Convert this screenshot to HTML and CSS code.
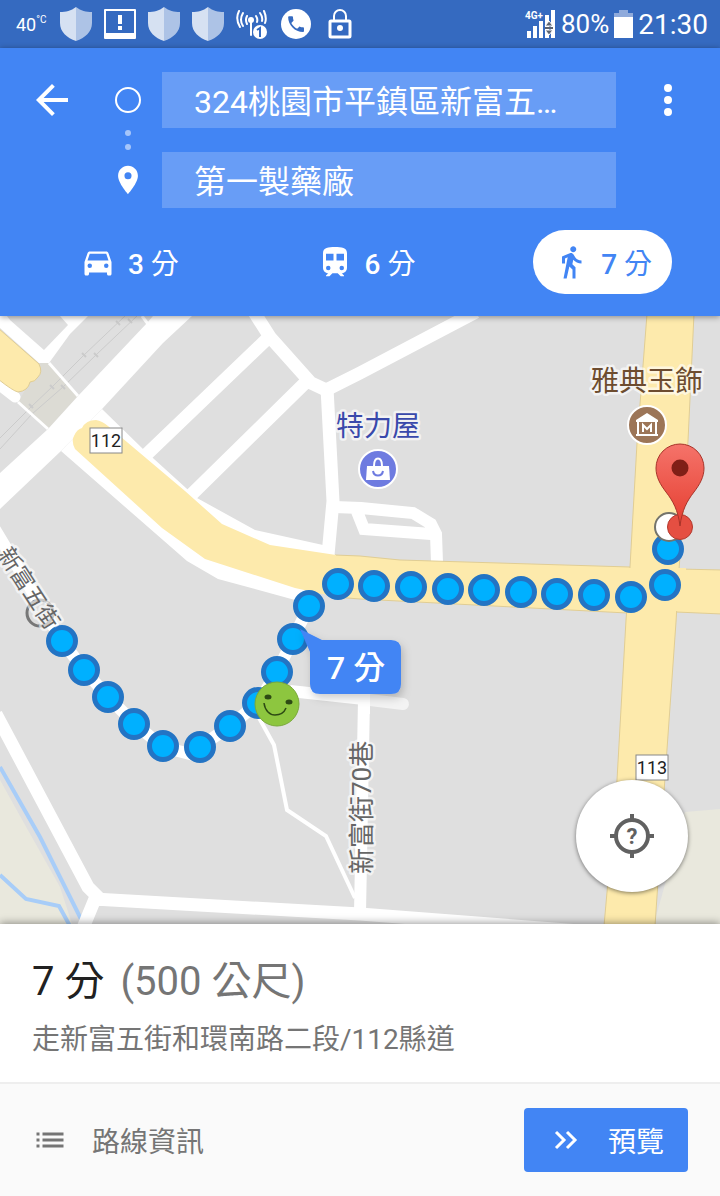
FILE: index.html
```html
<!DOCTYPE html>
<html lang="zh-Hant">
<head>
    <meta charset="UTF-8">
    <meta name="viewport" content="width=device-width, initial-scale=1">
    <title>路線規劃</title>
    <link rel="stylesheet" href="styles.css">
</head>
<body>
    <!-- shared icons -->
    <svg class="defs" aria-hidden="true">
        <symbol id="shield" viewBox="0 0 32 34">
            <path d="M16 0C11 4 6 5 0 5v11c0 9 7 15 16 18z" fill="#d6e1f2"/>
            <path d="M16 0c5 4 10 5 16 5v11c0 9-7 15-16 18z" fill="#adc3e6"/>
        </symbol>
    </svg>

    <div class="statusbar">
        <div class="status-left">
            <span class="temp">40<small>°C</small></span>
            <svg class="status-icon"><use href="#shield"/></svg>
            <svg class="status-icon" viewBox="0 0 32 34">
                <path d="M1 3h30v28H1z" fill="none" stroke="#fff" stroke-width="2" stroke-linejoin="round"/>
                <path d="M1 26h30v5H1zM14 8h4v9h-4zM14 19h4v4h-4z" fill="#fff"/>
                <path d="M11 26h10l-5 4z" fill="#fff"/>
            </svg>
            <svg class="status-icon"><use href="#shield"/></svg>
            <svg class="status-icon"><use href="#shield"/></svg>
            <svg class="status-icon" viewBox="0 0 32 34">
                <g fill="none" stroke="#fff" stroke-width="2" stroke-linecap="round">
                    <path d="M11 9q-2 4 0 8M7 6q-4 7 0 13M3 4q-4 8 1 16M20 9q2 3 1 6M24 6q3 4 2 8M28 4q3 7 1 12"/>
                    <path d="M15 13v15"/>
                </g>
                <circle cx="15" cy="13" r="3" fill="#fff"/>
                <circle cx="24" cy="25" r="7" fill="#fff"/>
                <path d="M21 23l3-2v9" fill="none" stroke="#356ac0" stroke-width="2"/>
            </svg>
            <svg class="status-icon" viewBox="0 0 32 34">
                <circle cx="16" cy="17" r="15" fill="#fff"/>
                <path transform="translate(5.500 6.500) scale(.88)" fill="#356ac0" d="M6.600 10.800c1.400 2.800 3.800 5.100 6.600 6.600l2.200-2.200c.3-.3.7-.4 1-.2 1.100.4 2.300.6 3.600.6.600 0 1 .4 1 1V20c0 .6-.4 1-1 1C10.600 21 3 13.400 3 4c0-.6.5-1 1-1h3.500c.6 0 1 .5 1 1 0 1.300.2 2.500.6 3.600.1.300 0 .7-.3 1z"/>
            </svg>
            <svg class="status-icon" viewBox="0 0 32 34">
                <rect x="6" y="14" width="20" height="16" rx="1" fill="none" stroke="#fff" stroke-width="3"/>
                <path d="M10 14V9a6 6 0 0 1 12 0v5" fill="none" stroke="#fff" stroke-width="2"/>
                <circle cx="16" cy="21" r="3" fill="#fff"/>
            </svg>
        </div>
        <div class="status-right">
            <svg class="signal" viewBox="0 0 32 30">
                <path d="M3 22h4v7H3zM9 17h4v12H9zM15 12h4v17h-4zM21 6h4v23h-4zM27 1h4v28h-4z" fill="#fff"/>
                <path d="M25 12l4 5h-8zM25 26l4-5h-8z" fill="#5a6270" stroke="#fff" stroke-width="1"/>
                <path d="M21 19h8" stroke="#5a6270" stroke-width="2"/>
                <text class="signal-text" x="1" y="10">4G+</text>
            </svg>
            <span class="battery-text">80%</span>
            <svg class="battery" viewBox="0 0 19 28">
                <path d="M5 0h9v3h5v5H0V3h5z" fill="#8faadb"/>
                <path d="M0 7h19v21H0z" fill="#fff"/>
            </svg>
            <span class="clock">21:30</span>
        </div>
    </div>

    <header class="header">
        <div class="search">
            <button class="icon-btn" aria-label="返回">
                <svg width="48" height="48" viewBox="0 0 24 24"><path d="M20 11H7.800l5.600-5.600L12 4l-8 8 8 8 1.400-1.400L7.800 13H20z" fill="#fff"/></svg>
            </button>
            <div class="rail">
                <span class="rail-end"><span class="origin"></span></span>
                <span class="rail-dots"><i></i><i></i></span>
                <span class="rail-end">
                    <svg width="34" height="34" viewBox="0 0 24 24"><path d="M12 2C8.100 2 5 5.100 5 9c0 5.300 7 13 7 13s7-7.700 7-13c0-3.900-3.100-7-7-7zm0 9.500a2.500 2.500 0 1 1 0-5 2.500 2.500 0 0 1 0 5z" fill="#fff"/></svg>
                </span>
            </div>
            <div class="fields">
                <input type="text" class="field" aria-label="起點" value="324桃園市平鎮區新富五…">
                <input type="text" class="field" aria-label="目的地" value="第一製藥廠">
            </div>
            <button class="icon-btn" aria-label="更多選項">
                <svg width="48" height="48" viewBox="0 0 24 24"><path d="M12 8a2 2 0 1 0 0-4 2 2 0 0 0 0 4zm0 2a2 2 0 1 0 0 4 2 2 0 0 0 0-4zm0 6a2 2 0 1 0 0 4 2 2 0 0 0 0-4z" fill="#fff"/></svg>
            </button>
        </div>

        <nav class="modes">
            <button class="mode">
                <svg viewBox="0 0 24 24"><path d="M18.920 6.010C18.720 5.420 18.160 5 17.500 5h-11c-.66 0-1.210.42-1.420 1.010L3 12v8c0 .55.45 1 1 1h1c.55 0 1-.45 1-1v-1h12v1c0 .55.45 1 1 1h1c.55 0 1-.45 1-1v-8zM6.500 16a1.500 1.500 0 1 1 0-3 1.500 1.500 0 0 1 0 3zm11 0a1.500 1.500 0 1 1 0-3 1.500 1.500 0 0 1 0 3zM5 11l1.500-4.500h11L19 11z"/></svg>
                <span><b>3</b> 分</span>
            </button>
            <button class="mode">
                <svg viewBox="0 0 24 24"><path d="M12 2c-4.400 0-8 .5-8 4v9.800C4 17.800 5.600 19.500 7.500 19.500L6 21v.5h2.300l2-2h3.500l2 2H18V21l-1.500-1.500c1.900 0 3.500-1.700 3.500-3.700V6c0-3.500-3.600-4-8-4zM7.500 17.500a1.500 1.500 0 1 1 0-3 1.500 1.500 0 0 1 0 3zm3.500-6.500H6V6.500h5zm5.500 6.500a1.500 1.500 0 1 1 0-3 1.500 1.500 0 0 1 0 3zm1.500-6.500h-5V6.500h5z"/></svg>
                <span><b>6</b> 分</span>
            </button>
            <button class="mode active">
                <svg viewBox="0 0 24 24"><path d="M13.500 5.500c1.100 0 2-.9 2-2s-.9-2-2-2-2 .9-2 2 .9 2 2 2zM9.800 8.900L7 23h2.100l1.800-8 2.100 2v6h2v-7.500l-2.100-2 .6-3C14.800 12 16.800 13 19 13v-2c-1.900 0-3.500-1-4.300-2.400l-1-1.600c-.4-.6-1-1-1.700-1-.3 0-.5.1-.8.1L6 8.300V13h2V9.600z"/></svg>
                <span><b>7</b> 分</span>
            </button>
        </nav>
    </header>

    <main class="map">
        <svg class="map-canvas" viewBox="0 0 720 608" preserveAspectRatio="xMidYMid slice" role="img" aria-label="步行路線地圖">
            <defs>
                <linearGradient id="pinFill" x1="0" y1="0" x2="0" y2="1">
                    <stop offset="0" stop-color="#f5736a"/>
                    <stop offset="1" stop-color="#e53e30"/>
                </linearGradient>
                <filter id="drop" x="-20%" y="-20%" width="150%" height="160%">
                    <feDropShadow dx="2" dy="4" stdDeviation="4" flood-opacity=".2"/>
                </filter>
            </defs>

            <!-- land and water -->
            <rect width="720" height="608" fill="#dfdfdf"/>
            <path d="M0 464l20 36 40 71 12 37H0zM685 496l35-3v115h-66z" fill="#e9e8dd"/>
            <path d="M0 451l40 70 42 84M0 559l26 24 33 7 11 20" fill="none" stroke="#a8cdf8" stroke-width="4"/>

            <!-- railway -->
            <path d="M39 47h10l29 33-30 33-30-27 12-20z" fill="#dcdbd4"/>
            <path d="M0 122l32-32 20-19 32-32L125 0M0 133l32-35 31-27 34-33 40-38" fill="none" stroke="#cbcbcb" stroke-width="1"/>
            <path d="M29 88l4 4M50 69l4 4M61 69l4 4M82 37l4 4M94 37l4 4M31 97l4 4M116 5l4 4M128 3l4 4" stroke="#cbcbcb" stroke-width="2"/>

            <!-- white roads -->
            <path d="M0 157l48-44 30-33 69-73 6-7h39l-29 27-61 66-41 42-61 58z" fill="#fff"/>
            <path d="M0 0h7l3 4 34 30L68 9l-8-9h28L70 18 49 47H39L0 12z" fill="#fff"/>
            <path d="M49 47l29 33M18 86l30 27M142 0l6 8" fill="none" stroke="#fff" stroke-width="3"/>
            <path d="M-4 66l19 15" stroke="#fff" stroke-width="11" stroke-linecap="round"/>
            <g fill="none" stroke="#fff" stroke-width="13">
                <path d="M254-4l16 25 41 46 15 7 34-17L476-4"/>
                <path d="M327 72l6 113-5 54"/>
                <path d="M268 22L147 138M305 67L190 180"/>
                <path d="M334 191l27 1 52 5 18 11 5 10 1 29M431 218l-67-5-8-20" stroke-width="12"/>
                <path d="M-4 398l92 173 12 12M97 578l-14 34M94 583l266 15 220 17"/>
                <path d="M290 375l74 8-4 214" stroke-width="12"/>
                <path d="M370 384l33 4" stroke="#f3f3f3" stroke-width="12" stroke-linecap="round"/>
                <path d="M364 378v20" stroke-width="12"/>
                <path d="M-6 212l68 113 22 29 25 28 25 25 29 24 27 7 40-28 28-23 19-31 16-33 16-33" stroke-width="12"/>
                <path d="M258 400l16 29 13 65 39 26 29 62" stroke-width="4"/>
            </g>
            <path d="M102 93l41 40 54 49 58 32 68 15 12 10-25 46-15-1-77-21-31-18L61 135z" fill="#fff"/>

            <!-- county roads -->
            <g fill="#fdeaac" stroke="#e0cd94" stroke-width="1">
                <path d="M-2 12l41 36q4 8-1 13-3 5-8 5-2 9-12 10-5-1-20-13z"/>
                <path d="M335 239l25 1 40 4 230 7 49 2 43 1v44l-46-2-49 1-267-14-25-2z"/>
            </g>
            <path d="M75 133q-4-8-1-13 3-7 8-8 4-8 14-8 6 1 12 6l77 65 37 33 48 21 66 10v42l-41-9-90-29-43-31z" fill="#fdeaac"/>
            <g fill="#fdeaac">
                <path d="M647-2l-10 129-7 124-4 53-9 160-13 146h51l9-134 12-170 3-52 9-129 6-127z" stroke="#e0cd94" stroke-width="1"/>
                <path d="M622 252h64v43h-64z"/>
            </g>

            <!-- road numbers -->
            <g class="plate">
                <rect x="90" y="112" width="32" height="25"/>
                <text x="106" y="131">112</text>
                <rect x="636" y="439" width="32" height="25"/>
                <text x="652" y="458">113</text>
            </g>

            <!-- route -->
            <circle cx="40" cy="297" r="13" fill="#ddd" stroke="#777" stroke-width="3"/>
            <g fill="#00b0ff" stroke="#2374c4" stroke-width="5">
                <circle cx="62" cy="325" r="13.500"/>
                <circle cx="84" cy="354" r="13.500"/>
                <circle cx="108" cy="381" r="13.500"/>
                <circle cx="134" cy="408" r="13.500"/>
                <circle cx="163" cy="430" r="13.500"/>
                <circle cx="200" cy="431" r="13.500"/>
                <circle cx="230" cy="410" r="13.500"/>
                <circle cx="258" cy="387" r="13.500"/>
                <circle cx="277" cy="356" r="13.500"/>
                <circle cx="293" cy="323" r="13.500"/>
                <circle cx="309" cy="290" r="13.500"/>
                <circle cx="338" cy="268" r="13.500"/>
                <circle cx="374" cy="270" r="13.500"/>
                <circle cx="411" cy="271" r="13.500"/>
                <circle cx="448" cy="273" r="13.500"/>
                <circle cx="484" cy="274" r="13.500"/>
                <circle cx="521" cy="276" r="13.500"/>
                <circle cx="557" cy="278" r="13.500"/>
                <circle cx="594" cy="279" r="13.500"/>
                <circle cx="631" cy="281" r="13.500"/>
                <circle cx="665" cy="269" r="13.500"/>
                <circle cx="668" cy="233" r="13.500"/>
            </g>
            <circle cx="669" cy="211" r="14" fill="#fff" stroke="#74746c" stroke-width="2"/>

            <!-- street and place names -->
            <text class="label street" transform="translate(-3 238) rotate(57)">新富五街</text>
            <text class="label lane" transform="translate(371 558) rotate(-90)">新富街70巷</text>
            <text class="label shop" x="336" y="120">特力屋</text>
            <text class="label museum" x="591" y="75">雅典玉飾</text>

            <g transform="translate(378 153)">
                <circle r="19" fill="#6e7be0" stroke="#fff" stroke-width="2"/>
                <path d="M-11-3h22l1 14h-24z" fill="#fff"/>
                <path d="M-4-3c0-10 8-10 8 0" fill="none" stroke="#fff" stroke-width="2"/>
                <path d="M-5 2c1 6 9 6 10 0" fill="none" stroke="#6e7be0" stroke-width="2"/>
            </g>
            <g transform="translate(647 109)">
                <circle r="19" fill="#9c7557" stroke="#fff" stroke-width="2"/>
                <path d="M0-12L11-5v2h-22v-2zM-11 9h22v2h-22z" fill="#fff"/>
                <path d="M-9-4V9M9-4V9" fill="none" stroke="#fff" stroke-width="2"/>
                <path d="M-4 7V0l4 4 4-4v7" fill="none" stroke="#fff" stroke-width="2"/>
            </g>

            <!-- destination pin -->
            <circle cx="680" cy="211" r="12.500" fill="#e54f42" stroke="#b2382c" stroke-width="1"/>
            <path d="M680 210c-2-16-7-25-14-34-6-8-10-15-10-24a24 24 0 0 1 48 0c0 9-4 16-10 24-7 9-12 18-14 34z" fill="url(#pinFill)" stroke="#a8342a" stroke-width="1"/>
            <circle cx="680" cy="152" r="8.500" fill="#801f17"/>

            <!-- current position -->
            <circle cx="277" cy="388" r="22" fill="#8dc63f" stroke="#79a93a" stroke-width="1"/>
            <ellipse cx="268" cy="381" rx="3.500" ry="2.500" fill="#2d4a14"/>
            <ellipse cx="289" cy="386" rx="3.500" ry="2.500" fill="#2d4a14"/>
            <path d="M264 387c1 8 6 12 11 12s9-2 11-7" fill="none" stroke="#2d4a14" stroke-width="1.500"/>

            <!-- time bubble -->
            <path d="M300 313l22 11h69q10 0 10 10v34q0 10-10 10h-71q-10 0-10-10v-32z" fill="#4285f4" filter="url(#drop)"/>
            <text class="bubble" x="327" y="363">7 分</text>
        </svg>

        <button class="locate" aria-label="我的位置">
            <svg width="44" height="44" viewBox="0 0 44 44">
                <g fill="none" stroke="#616161" stroke-width="4">
                    <circle cx="22" cy="22" r="16"/>
                    <path d="M22 0v6M22 38v6M0 22h6M38 22h6"/>
                </g>
                <text class="locate-mark" x="22" y="30">?</text>
            </svg>
        </button>
    </main>

    <section class="summary">
        <h1>7 分 <span>(500 公尺)</span></h1>
        <p>走新富五街和環南路二段/112縣道</p>
    </section>

    <footer class="footer">
        <button class="details">
            <svg width="36" height="36" viewBox="0 0 24 24"><path d="M3 13h2v-2H3zm0 4h2v-2H3zm0-8h2V7H3zm4 4h14v-2H7zm0 4h14v-2H7zM7 7v2h14V7z" fill="#757575"/></svg>
            路線資訊
        </button>
        <button class="preview">
            <svg width="24" height="20" viewBox="0 0 24 20"><path d="M2 2l8 8-8 8M13 2l8 8-8 8" fill="none" stroke="#fff" stroke-width="3"/></svg>
            預覽
        </button>
    </footer>
</body>
</html>
```

FILE: styles.css
```css
* {
    box-sizing: border-box;
}
body {
    margin: 0;
    min-height: 100vh;
    display: flex;
    flex-direction: column;
    font-family: Roboto, "Noto Sans CJK TC", sans-serif;
    font-size: 28px;
    color: #757575;
    background: #fff;
}
button {
    font: inherit;
    color: inherit;
    background: none;
    border: 0;
    padding: 0;
    cursor: pointer;
}
svg {
    display: block;
    flex: none;
}
.defs {
    position: absolute;
    width: 0;
    height: 0;
}

/* status bar */
.statusbar {
    display: flex;
    justify-content: space-between;
    align-items: center;
    height: 48px;
    padding: 0 12px 0 16px;
    background: #356ac0;
    color: #fff;
}
.status-left {
    display: flex;
    align-items: center;
    gap: 12px;
}
.temp {
    display: flex;
    width: 32px;
    font-size: 18px;
    font-weight: 400;
}
.temp small {
    font-size: 10px;
}
.status-icon {
    width: 32px;
    height: 34px;
}
.status-right {
    display: flex;
    align-items: center;
    gap: 5px;
}
.signal {
    width: 32px;
    height: 30px;
}
.signal-text {
    font-size: 10px;
    font-weight: 700;
    fill: #fff;
    stroke: #356ac0;
    stroke-width: 2px;
    paint-order: stroke;
}
.battery-text {
    font-size: 26px;
}
.battery {
    width: 19px;
    height: 28px;
}
.clock {
    font-size: 28px;
}

/* header */
.header {
    position: relative;
    z-index: 1;
    background: #4285f4;
    color: #fff;
    padding: 24px 0 22px;
    box-shadow: 0 1px 6px rgba(0,0,0,0.4);
}
.search {
    display: grid;
    grid-template-columns: 104px 48px 1fr 104px;
    align-items: start;
}
.icon-btn {
    display: flex;
    align-items: center;
    justify-content: center;
    height: 56px;
}
.rail-end {
    display: flex;
    align-items: center;
    justify-content: center;
    height: 56px;
}
.origin {
    width: 26px;
    height: 26px;
    border: 2px solid #fff;
    border-radius: 50%;
}
.rail-dots {
    display: flex;
    flex-direction: column;
    align-items: center;
    justify-content: center;
    gap: 8px;
    height: 24px;
}
.rail-dots i {
    width: 6px;
    height: 6px;
    border-radius: 50%;
    background: #a5c5fa;
}
.fields {
    display: flex;
    flex-direction: column;
    gap: 24px;
    padding-left: 10px;
}
.field {
    width: 100%;
    height: 56px;
    padding: 0 32px 2px;
    border: 0;
    border-radius: 0;
    background: #689df6;
    color: #fff;
    font: inherit;
    font-size: 32px;
    text-overflow: ellipsis;
}
.modes {
    display: flex;
    justify-content: space-between;
    padding: 22px 48px 0 60px;
}
.mode {
    display: flex;
    align-items: center;
    gap: 12px;
    height: 64px;
    padding: 0 20px;
    border-radius: 32px;
}
.mode svg {
    width: 36px;
    height: 36px;
    fill: currentColor;
}
.mode b {
    font-weight: 500;
}
.mode.active {
    background: #fff;
    color: #4285f4;
}

/* map */
.map {
    position: relative;
    flex: 1;
}
.map-canvas {
    width: 100%;
    height: 100%;
}
.plate rect {
    fill: #fff;
    stroke: #888;
    stroke-width: 1px;
}
.plate text {
    font-size: 18px;
    fill: #222;
    text-anchor: middle;
}
.label {
    stroke: rgba(255,255,255,0.6);
    stroke-width: 5px;
    stroke-linejoin: round;
    paint-order: stroke;
}
.street {
    font-size: 23px;
    fill: #666;
}
.lane {
    font-size: 26px;
    fill: #666;
}
.shop {
    font-size: 28px;
    fill: #3949ab;
}
.museum {
    font-size: 28px;
    fill: #6d4c2f;
}
.bubble {
    font-size: 32px;
    font-weight: 500;
    fill: #fff;
}
.locate {
    position: absolute;
    right: 32px;
    bottom: 32px;
    display: flex;
    align-items: center;
    justify-content: center;
    width: 112px;
    height: 112px;
    border-radius: 50%;
    background: #fff;
    box-shadow: 0 1px 4px rgba(0,0,0,0.5);
}
.locate-mark {
    font-size: 22px;
    font-weight: 700;
    fill: #616161;
    text-anchor: middle;
}

/* bottom sheet */
.summary {
    position: relative;
    z-index: 1;
    padding: 34px 32px 22px;
    background: #fff;
    box-shadow: 0 -1px 8px rgba(0,0,0,0.4);
}
.summary h1 {
    display: flex;
    gap: 16px;
    margin: 0;
    font-size: 40px;
    font-weight: 400;
    line-height: 48px;
    color: #212121;
}
.summary h1 span {
    color: #757575;
}
.summary p {
    margin: 14px 0 0;
    line-height: 40px;
}
.footer {
    position: relative;
    z-index: 1;
    display: flex;
    align-items: center;
    justify-content: space-between;
    padding: 24px 32px;
    border-top: 2px solid #eee;
    background: #fafafa;
}
.details {
    display: flex;
    align-items: center;
    gap: 24px;
}
.preview {
    display: flex;
    align-items: center;
    gap: 30px;
    height: 64px;
    padding: 0 24px 0 30px;
    border-radius: 4px;
    background: #4285f4;
    color: #fff;
}
```
